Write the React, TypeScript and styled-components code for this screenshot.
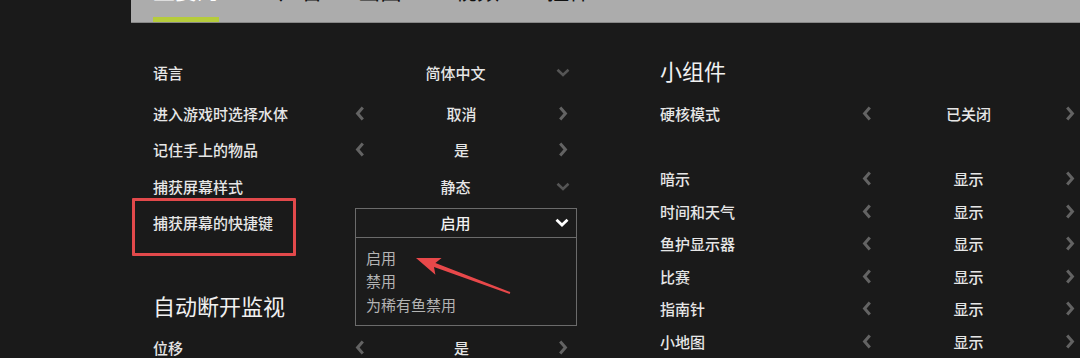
import React from "react";
import styled, { createGlobalStyle } from "styled-components";

const GlobalStyle = createGlobalStyle`
  html, body {
    margin: 0;
    padding: 0;
    background: #1a1a1a;
  }
  body {
    font-family: "Noto Sans CJK SC", "Noto Sans", sans-serif;
    color: #e6e6e6;
    overflow: hidden;
  }
`;

const Page = styled.div`
  position: relative;
  display: flex;
  width: 1080px;
  height: 358px;
  overflow: hidden;
  background: #1a1a1a;
`;

const Gutter = styled.div`
  width: 131px;
  flex-shrink: 0;
`;

const Main = styled.div`
  flex: 1;
  display: flex;
  flex-direction: column;
  min-width: 0;
`;

const TabBar = styled.nav`
  height: 22px;
  flex-shrink: 0;
  background: #acacac;
  border-bottom: 1px solid #888;
  display: flex;
  align-items: flex-start;
  padding-left: 22px;
  overflow: hidden;
`;

const Tab = styled.div<{ $active?: boolean; $w: number }>`
  position: relative;
  width: ${(p) => p.$w}px;
  height: 22px;
  flex-shrink: 0;
  font-size: 22px;
  line-height: 22px;
  color: ${(p) => (p.$active ? "#fff" : "#111")};

  span {
    display: block;
    margin-top: -22px;
  }

  &::after {
    content: "";
    display: ${(p) => (p.$active ? "block" : "none")};
    position: absolute;
    left: 0;
    bottom: 0;
    width: 66px;
    height: 5px;
    background: #b6cc3c;
  }
`;

const Columns = styled.div`
  display: grid;
  grid-template-columns: 507px 1fr;
  padding-left: 22px;
`;

const Column = styled.div<{ $top: number }>`
  display: flex;
  flex-direction: column;
  padding-top: ${(p) => p.$top}px;
`;

const Heading = styled.h2<{ $mt?: number; $mb: number }>`
  margin: ${(p) => p.$mt ?? 0}px 0 ${(p) => p.$mb}px;
  height: 30px;
  flex-shrink: 0;
  font-size: 22px;
  line-height: 30px;
  font-weight: 400;
  color: #f0f0f0;
`;

const Row = styled.div<{ $h: number; $mb?: number }>`
  display: grid;
  grid-template-columns: 202px auto;
  align-items: center;
  height: ${(p) => p.$h}px;
  margin-bottom: ${(p) => p.$mb ?? 0}px;
  flex-shrink: 0;
`;

const Label = styled.div`
  font-size: 15px;
  font-weight: 500;
  color: #e6e6e6;
  white-space: nowrap;
`;

const Stepper = styled.div`
  display: flex;
  align-items: center;
  justify-content: space-between;
  width: 213px;
`;

const Value = styled.div`
  flex: 1;
  text-align: center;
  font-size: 15px;
  font-weight: 500;
  color: #e6e6e6;
`;

const Select = styled.div`
  display: flex;
  align-items: center;
  width: 222px;
  height: 28px;
  box-sizing: border-box;
  padding-right: 7px;
`;

const OpenSelect = styled.div`
  position: relative;
  width: 222px;
`;

const SelectHead = styled(Select)`
  height: 30px;
  border: 1px solid #6b6b6b;
  background: #1b1b1b;
  color: #f2f2f2;
`;

const SelectValue = styled(Value)`
  color: inherit;
`;

const Menu = styled.ul`
  position: absolute;
  left: 0;
  top: 29px;
  width: 222px;
  height: 89px;
  box-sizing: border-box;
  margin: 0;
  padding: 8px 0 0 10px;
  list-style: none;
  border: 1px solid #6b6b6b;
  background: #1b1b1b;
`;

const MenuItem = styled.li`
  font-size: 15px;
  line-height: 23.5px;
  color: #b4b4b4;
`;

const RedBox = styled.div`
  position: absolute;
  left: 132px;
  top: 198px;
  width: 164px;
  height: 58px;
  box-sizing: border-box;
  border: 3px solid #e2494b;
  border-radius: 1px;
  pointer-events: none;
`;

const ArrowNote = styled.svg`
  position: absolute;
  left: 410px;
  top: 252px;
  width: 106px;
  height: 46px;
  pointer-events: none;
`;

const Chevron = ({ dir }: { dir: "left" | "right" }) => (
  <svg width="10" height="15" viewBox="0 0 10 15">
    <path
      d={dir === "left" ? "M7.8 1.6 L2.6 7.5 L7.8 13.4" : "M2.2 1.6 L7.4 7.5 L2.2 13.4"}
      fill="none"
      stroke="#636363"
      strokeWidth="3"
    />
  </svg>
);

const ChevronDown = ({ light }: { light?: boolean }) => (
  <svg width="14" height="9" viewBox="0 0 14 9">
    <path
      d="M1.5 1.8 L7 7 L12.5 1.8"
      fill="none"
      stroke={light ? "#ffffff" : "#555555"}
      strokeWidth={light ? 2.8 : 2.6}
    />
  </svg>
);

const StepRow = ({ label, value, h, mb }: { label: string; value: string; h: number; mb?: number }) => (
  <Row $h={h} $mb={mb}>
    <Label>{label}</Label>
    <Stepper>
      <Chevron dir="left" />
      <Value>{value}</Value>
      <Chevron dir="right" />
    </Stepper>
  </Row>
);

const SelectRow = ({ label, value, h, mb }: { label: string; value: string; h: number; mb?: number }) => (
  <Row $h={h} $mb={mb}>
    <Label>{label}</Label>
    <Select>
      <SelectValue>{value}</SelectValue>
      <ChevronDown />
    </Select>
  </Row>
);

const tabs = [
  { name: "主要的", w: 126 },
  { name: "声音", w: 79 },
  { name: "画面", w: 97 },
  { name: "视频", w: 92 },
  { name: "控件", w: 100 },
];

const widgets = ["暗示", "时间和天气", "鱼护显示器", "比赛", "指南针", "小地图"];

export default function App() {
  const rowL = 36.5;
  const rowR = 32.6;
  return (
    <>
      <GlobalStyle />
      <Page>
        <Gutter />
        <Main>
          <TabBar>
            {tabs.map((t, i) => (
              <Tab key={t.name} $active={i === 0} $w={t.w}>
                <span>{t.name}</span>
              </Tab>
            ))}
          </TabBar>
          <Columns>
            <Column $top={31}>
              <SelectRow label="语言" value="简体中文" h={36} mb={5} />
              <StepRow label="进入游戏时选择水体" value="取消" h={rowL} />
              <StepRow label="记住手上的物品" value="是" h={rowL} />
              <SelectRow label="捕获屏幕样式" value="静态" h={rowL} />
              <Row $h={rowL}>
                <Label>捕获屏幕的快捷键</Label>
                <OpenSelect>
                  <SelectHead>
                    <SelectValue>启用</SelectValue>
                    <ChevronDown light />
                  </SelectHead>
                  <Menu>
                    <MenuItem>启用</MenuItem>
                    <MenuItem>禁用</MenuItem>
                    <MenuItem>为稀有鱼禁用</MenuItem>
                  </Menu>
                </OpenSelect>
              </Row>
              <Heading $mt={49} $mb={9}>自动断开监视</Heading>
              <StepRow label="位移" value="是" h={rowL} />
            </Column>
            <Column $top={32}>
              <Heading $mb={12}>小组件</Heading>
              <StepRow label="硬核模式" value="已关闭" h={rowR} mb={rowR} />
              {widgets.map((w) => (
                <StepRow key={w} label={w} value="显示" h={rowR} />
              ))}
            </Column>
          </Columns>
        </Main>
        <RedBox />
        <ArrowNote viewBox="410 252 106 46">
          <polygon
            points="416,258 441.6,258 435.4,263.1 510.3,292.1 509.7,293.9 434,266.9 435.4,274.8"
            fill="#e8484a"
          />
        </ArrowNote>
      </Page>
    </>
  );
}
